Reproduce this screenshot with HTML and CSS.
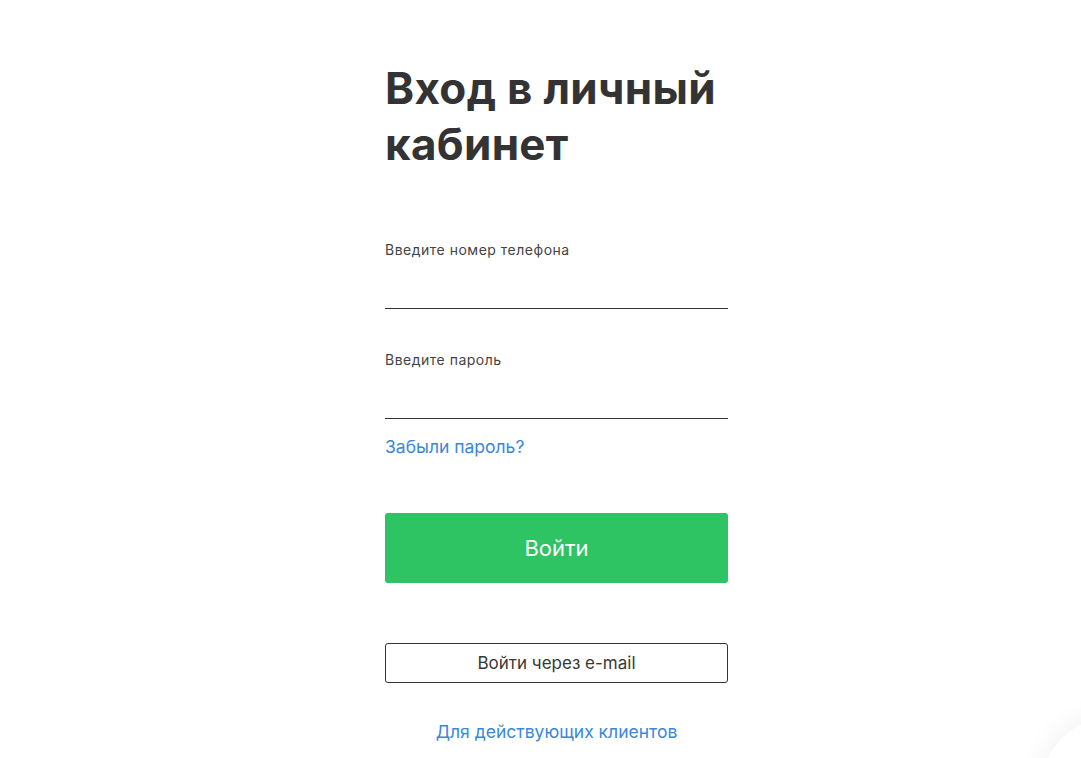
FILE: index.html
```html
<!DOCTYPE html>
<html lang="ru">
<head>
<meta charset="utf-8">
<link rel="stylesheet" href="styles.css">
</head>
<body>
<main class="page">
  <form class="login">
    <h1 class="title">Вход в личный кабинет</h1>
    <label class="field field-phone">
      <span class="field-label">Введите номер телефона</span>
      <span class="field-input"></span>
    </label>
    <label class="field field-pass">
      <span class="field-label">Введите пароль</span>
      <span class="field-input"></span>
    </label>
    <a class="forgot" href="#">Забыли пароль?</a>
    <button class="btn-primary" type="button">Войти</button>
    <button class="btn-outline" type="button">Войти через e-mail</button>
    <a class="clients" href="#">Для действующих клиентов</a>
  </form>
</main>
<div class="fab-shadow"></div>
</body>
</html>
```
FILE: styles.css
```css
html, body {
  margin: 0;
  padding: 0;
  background: #fff;
  height: 100%;
  overflow: hidden;
}
body {
  font-family: Inter, "Noto Sans", sans-serif;
  color: #333;
}
.page {
  display: flex;
  justify-content: center;
}
.login {
  width: 343px;
  margin-left: 32px;
  display: flex;
  flex-direction: column;
  padding-top: 60px;
}
.title {
  margin: 0;
  font-size: 44px;
  line-height: 56px;
  font-weight: 700;
  color: #333;
  letter-spacing: 0.3px;
}
.field {
  display: flex;
  flex-direction: column;
}
.field-phone { margin-top: 69px; }
.field-pass { margin-top: 42px; }
.field-label {
  font-size: 14px;
  line-height: 18px;
  letter-spacing: 0.5px;
  color: #444;
}
.field-input {
  display: block;
  height: 49px;
  border-bottom: 1px solid #333;
}
.forgot {
  margin-top: 16px;
  font-size: 17.5px;
  line-height: 24px;
  color: #3b87d9;
  text-decoration: none;
  align-self: flex-start;
}
.btn-primary {
  margin-top: 54px;
  height: 70px;
  border: none;
  border-radius: 3px;
  background: #2ec363;
  color: #fff;
  font-family: inherit;
  font-size: 22px;
  font-weight: 400;
}
.btn-outline {
  margin-top: 60px;
  height: 40px;
  border: 1px solid #333;
  border-radius: 3px;
  background: #fff;
  color: #383838;
  font-family: inherit;
  font-size: 17px;
}
.clients {
  margin-top: 37px;
  text-align: center;
  font-size: 17.5px;
  line-height: 24px;
  color: #3b87d9;
  text-decoration: none;
}
.fab-shadow {
  position: fixed;
  right: -100px;
  bottom: -100px;
  width: 140px;
  height: 140px;
  border-radius: 50%;
  background: #fff;
  box-shadow: 0 0 30px rgba(0,0,0,0.07);
}
```
